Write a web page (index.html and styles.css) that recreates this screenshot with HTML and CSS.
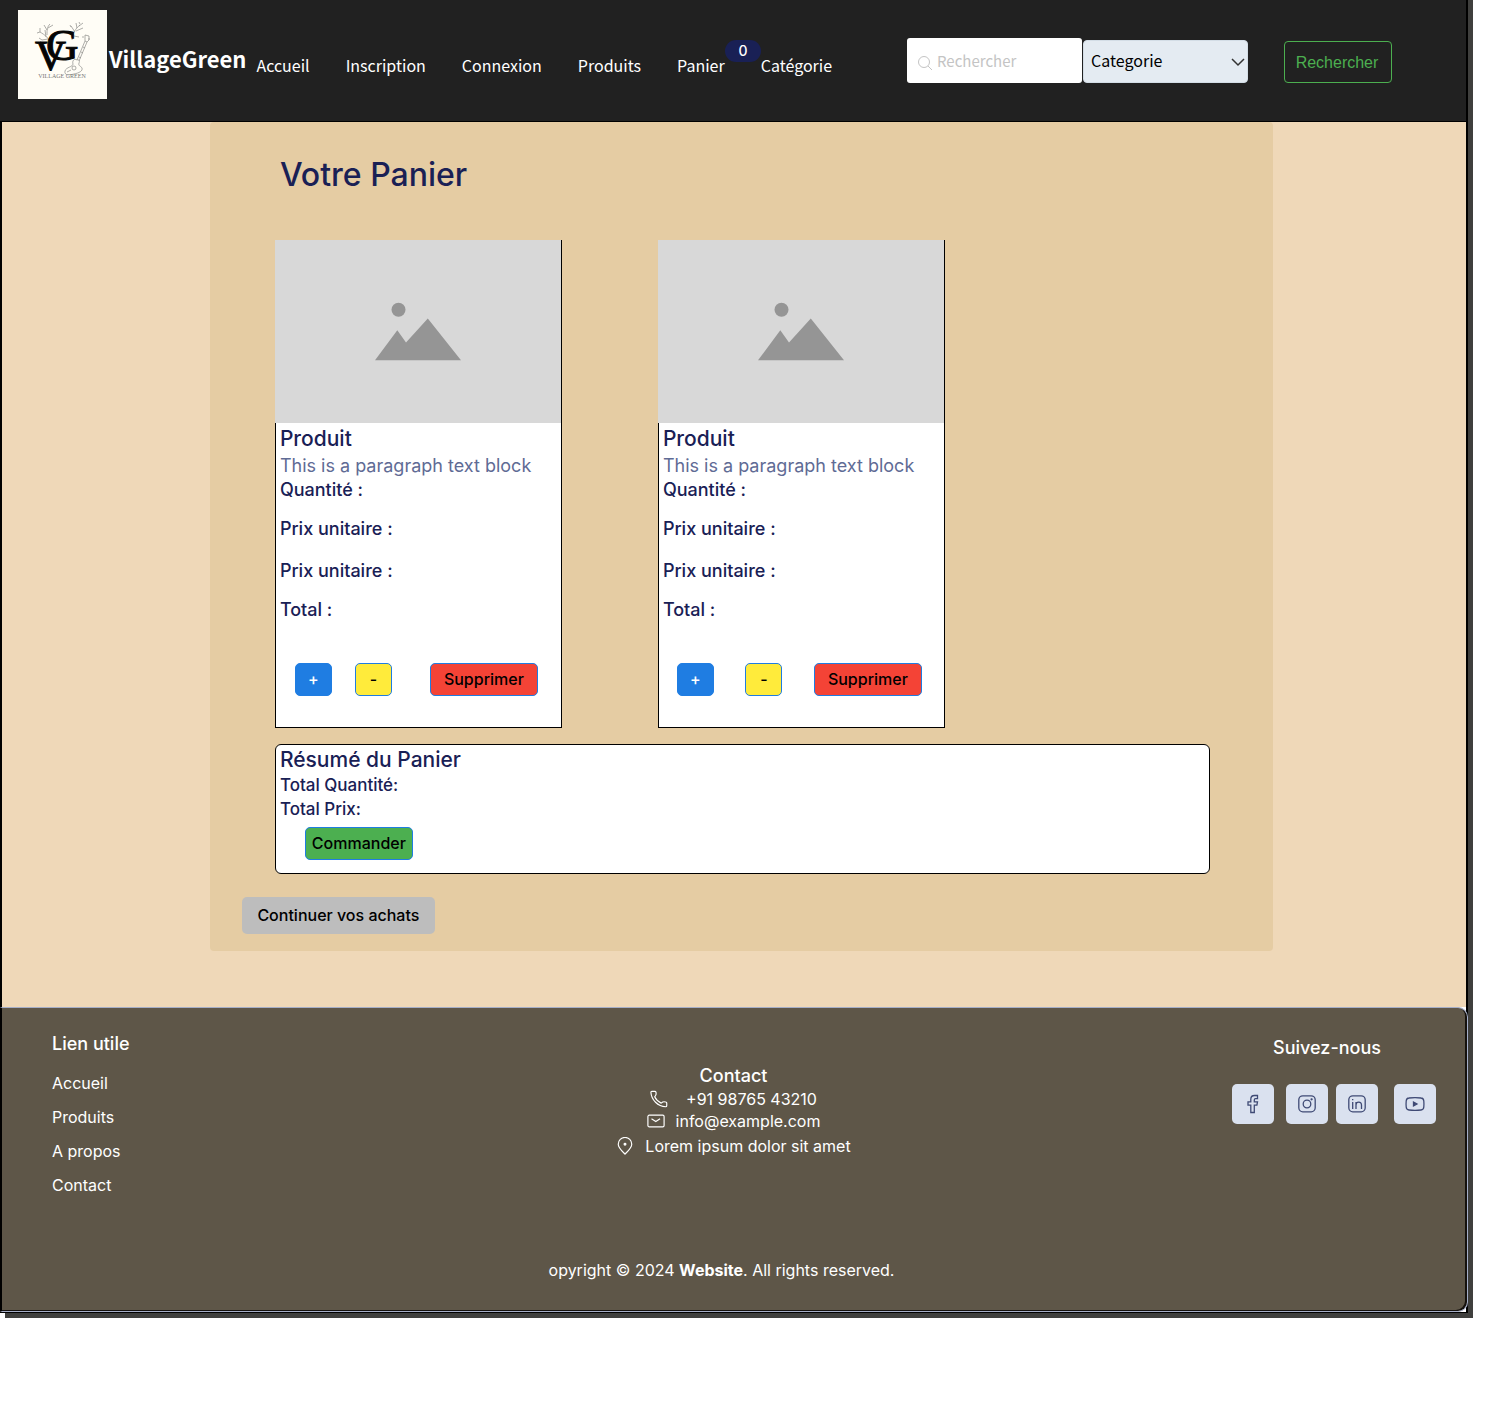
FILE: index.html
```html
<!DOCTYPE html>
<html lang="fr">
<head>
<meta charset="utf-8">
<meta name="viewport" content="width=device-width, initial-scale=1">
<title>VillageGreen - Votre Panier</title>
<link rel="stylesheet" href="styles.css">
</head>
<body>
<div class="page">
  <header class="header">
    <svg class="logo" viewBox="0 0 89 89" role="img" aria-label="Village Green">
      <rect width="89" height="89" fill="#fffdf6"/>
      <g fill="none" stroke="#8b8b88" stroke-width=".7">
        <path d="M33 34C31 28 27 25 22 22M28 27l-1-7M30 29l-6 1M29 25c0-5 0-8 3-11M29 20l-3-5M30 18l5-3M22 22l0-4M22 22l-3 1M24 30l-3-2M23 31l-2 3"/>
        <path d="M54 30c1-7 3-11 8-15M57 22l-4-6M59 18l-1-5M58 21l7-3M56 26l5 1M61 16l4-3M53 17l-1-2M62 14l-1-2"/>
        <path d="M59 50l8-19M61 51l8-19M67 31l0-6 4 1 0 4-2 2zM66 27l-2 0M70 29l2 0"/>
        <path d="M59 50c-3-2-5 1-4 4 0 3-7 3-8 7-1 5 5 4 9 3 5-1 9-3 8-6-1-2-4-2-3-5 1-2 0-4-2-3zM54 58a2 2 0 1 0 4 0a2 2 0 1 0-4 0M49 62l4-2M61 47l2 1M63 42l2 1M65 37l2 1"/>
      </g>
      <g class="logo-mark">
        <text x="28" y="50" font-size="45">G</text>
        <text x="17" y="60" font-size="43">V</text>
      </g>
      <text class="logo-name" x="44" y="68" font-size="6" text-anchor="middle">VILLAGE GREEN</text>
    </svg>
    <a class="brand" href="#">VillageGreen</a>
    <nav class="nav" aria-label="Navigation principale">
      <a href="#">Accueil</a>
      <a href="#">Inscription</a>
      <a href="#">Connexion</a>
      <a href="#">Produits</a>
      <a class="nav-cart" href="#">Panier<span class="badge">0</span></a>
      <a href="#">Catégorie</a>
    </nav>
    <form class="search">
      <label class="search-box">
        <svg viewBox="0 0 16 16" width="16" height="16" fill="none" stroke="#c4c4c4" aria-hidden="true"><circle cx="7" cy="7" r="5.5"/><path d="M11 11l4 4"/></svg>
        <input type="search" placeholder="Rechercher" aria-label="Rechercher">
      </label>
      <div class="select-box">
        <select aria-label="Categorie"><option>Categorie</option></select>
        <svg viewBox="0 0 14 10" width="14" height="10" fill="none" stroke="#333" stroke-width="1.5" aria-hidden="true"><path d="M1 2l6 6 6-6"/></svg>
      </div>
      <button class="search-submit" type="button">Rechercher</button>
    </form>
  </header>

  <main class="main">
    <section class="cart">
      <h1>Votre Panier</h1>
      <div class="products">
        <article class="product">
          <svg class="product-image" viewBox="0 0 286 183" role="img" aria-label="Image du produit"><rect width="286" height="183" fill="#d8d8d8"/><g fill="#959595"><circle cx="123.500" cy="69.800" r="7"/><path d="M100 120.300l22.300-30 8.700 12.200L152.800 78.500 186 120.300z"/></g></svg>
          <div class="product-text">
            <h2>Produit</h2>
            <p class="description">This is a paragraph text block</p>
            <p class="quantity">Quantité :</p>
            <p class="unit">Prix unitaire :</p>
            <p class="unit">Prix unitaire :</p>
            <p class="total">Total :</p>
          </div>
          <div class="actions">
            <button class="button step plus" type="button">+</button>
            <button class="button step minus" type="button">-</button>
            <button class="button wide delete" type="button">Supprimer</button>
          </div>
        </article>
        <article class="product">
          <svg class="product-image" viewBox="0 0 286 183" role="img" aria-label="Image du produit"><rect width="286" height="183" fill="#d8d8d8"/><g fill="#959595"><circle cx="123.500" cy="69.800" r="7"/><path d="M100 120.300l22.300-30 8.700 12.200L152.800 78.500 186 120.300z"/></g></svg>
          <div class="product-text">
            <h2>Produit</h2>
            <p class="description">This is a paragraph text block</p>
            <p class="quantity">Quantité :</p>
            <p class="unit">Prix unitaire :</p>
            <p class="unit">Prix unitaire :</p>
            <p class="total">Total :</p>
          </div>
          <div class="actions actions-even">
            <button class="button step plus" type="button">+</button>
            <button class="button step minus" type="button">-</button>
            <button class="button wide delete" type="button">Supprimer</button>
          </div>
        </article>
      </div>
      <section class="summary">
        <h2>Résumé du Panier</h2>
        <p>Total Quantité:</p>
        <p>Total Prix:</p>
        <button class="button wide order" type="button">Commander</button>
      </section>
      <button class="continue" type="button">Continuer vos achats</button>
    </section>
  </main>

  <footer class="footer">
    <div class="footer-columns">
      <nav class="footer-links" aria-label="Lien utile">
        <h3>Lien utile</h3>
        <a href="#">Accueil</a>
        <a href="#">Produits</a>
        <a href="#">A propos</a>
        <a href="#">Contact</a>
      </nav>
      <address class="contact">
        <h3>Contact</h3>
        <p class="phone"><svg viewBox="0 0 20 20" aria-hidden="true"><path d="M2 1.500h3.500c.7 0 1 .4 1.200 1.100.2 1.300.3 2.400-.3 3.200L5.200 7.600c1.300 3 4 5.500 7.200 7l1.700-1.200c1-.6 2-.4 3.400-.1.800.1 1.100.5 1.100 1.200v3c0 .7-.5 1.100-1.200 1.100C8.700 18.300 1.500 11 1 2.600c0-.7.400-1.100 1-1.100z"/></svg><a href="tel:+919876543210">+91 98765 43210</a></p>
        <p class="mail"><svg viewBox="0 0 20 20" aria-hidden="true"><rect x="1" y="3.500" width="18" height="13" rx="1.500"/><path d="M5 7.500l4.800 3 4.700-3"/></svg><a href="mailto:info@example.com">info@example.com</a></p>
        <p class="place"><svg viewBox="0 0 20 20" aria-hidden="true"><path d="M10 19C7 16 2.500 12 2.500 8a7.500 7.500 0 0 1 15 0c0 4-4.500 8-7.500 11z"/><circle cx="10" cy="8" r="1" fill="#fff"/></svg>Lorem ipsum dolor sit amet</p>
      </address>
      <section class="social">
        <h3>Suivez-nous</h3>
        <ul>
          <li><a href="#" aria-label="Facebook"><svg viewBox="0 0 20 20"><path d="M14.500 1.500h-3C9 1.500 7.800 3 7.800 5.300v2.500H5v3.400h2.800v7.300h3.500v-7.300h2.600l.6-3.400h-3.200V5.900c0-.8.3-1.200 1.200-1.200h2z"/></svg></a></li>
          <li><a href="#" aria-label="Instagram"><svg viewBox="0 0 20 20"><rect x="1.800" y="1.800" width="16.400" height="16" rx="4"/><circle cx="10" cy="10" r="3.800"/><circle cx="14.600" cy="5.300" r=".5" fill="#3f4a75"/></svg></a></li>
          <li><a href="#" aria-label="LinkedIn"><svg viewBox="0 0 20 20"><rect x="1.800" y="1.800" width="16.400" height="16" rx="4"/><path d="M5.700 8v7M5.700 5v1.200M9 15V8M9 11c0-3.500 5.500-4 5.500 0v4"/></svg></a></li>
          <li><a href="#" aria-label="YouTube"><svg viewBox="0 0 20 20"><path d="M4 4c4-.5 8-.5 12 0 2 .2 2.700 1.300 2.800 3 .2 2 .2 4 0 6-.1 1.700-.8 2.800-2.800 3-4 .4-8 .4-12 0-2-.2-2.700-1.300-2.800-3-.2-2-.2-4 0-6 .1-1.700.8-2.800 2.800-3z"/><path d="M8.500 8l3.500 2-3.500 2z" fill="#3f4a75"/></svg></a></li>
        </ul>
      </section>
    </div>
    <p class="copyright">opyright © 2024 <b>Website</b>. All rights reserved.</p>
  </footer>
</div>
</body>
</html>
```
FILE: styles.css
```css
* { box-sizing: border-box; }

body {
  min-height: 100vh;
  margin: 0;
  padding-bottom: 48px;
  background: #fff;
  color: #192055;
  font-family: Inter, "Liberation Sans", sans-serif;
  font-size: 16px;
}

h1, h2, h3, p, ul { margin: 0; padding: 0; font-weight: 500; }
a { color: inherit; text-decoration: none; }
button, input, select { font: inherit; }

.page {
  margin-right: 39px;
  border-right: 2px solid #000;
  border-bottom: 1px solid #000;
  box-shadow: 5px 0 0 #3f3f3d, 5px 5px 0 #3f3f3d;
}

/* Header */
.header {
  display: flex;
  align-items: flex-start;
  min-height: 122px;
  padding: 10px 74px 0 18px;
  border-bottom: 1px solid #000;
  background: #212121;
  color: #fff;
  font-family: "Noto Sans CJK JP", "Noto Sans", sans-serif;
}

.logo { flex: none; width: 89px; height: 89px; }
.logo-mark { fill: #050505; font-family: "Liberation Serif", serif; stroke: #050505; stroke-width: 1; }
.logo-name { fill: #777; font-family: "Liberation Serif", serif; }
.brand { margin: 32px 0 0 2px; font-size: 22px; line-height: 32px; font-weight: 700; }
.nav { display: flex; gap: 36px; margin: 43px 0 0 10px; line-height: 24px; }
.nav-cart { position: relative; }

.badge {
  position: absolute;
  left: 48px;
  top: -13px;
  width: 36px;
  height: 22px;
  border-radius: 11px;
  background: #192055;
  font-size: 14px;
  font-weight: 500;
  line-height: 22px;
  text-align: center;
  font-family: Inter, sans-serif;
}

.search { display: flex; align-items: flex-end; height: 73px; margin-left: auto; }

.search-box {
  display: flex;
  align-items: center;
  gap: 4px;
  width: 175px;
  height: 45px;
  margin-right: 1px;
  padding: 0 10px;
  border-radius: 3px;
  background: #fff;
}
.search-box svg { flex: none; margin-top: 4px; }
.search-box input { width: 100%; border: 0; padding: 0 0 2px; background: none; outline: 0; }
.search-box input::placeholder { color: #c4c4c4; opacity: 1; font-size: 15px; }

.select-box { display: grid; align-items: center; width: 165px; }
.select-box > * { grid-area: 1 / 1; }
.select-box select {
  appearance: none;
  width: 100%;
  height: 43px;
  padding: 0 7px 3px;
  border: 1px solid #d3dde6;
  border-radius: 4px;
  background: #e4ebf2;
  color: #000;
}
.select-box svg { justify-self: end; margin-right: 3px; pointer-events: none; }

.search-submit {
  width: 108px;
  height: 42px;
  margin-left: 36px;
  padding: 2px 2px 0 0;
  border: 1px solid #4caf50;
  border-radius: 4px;
  background: none;
  color: #4caf50;
  font-family: "Liberation Sans", Arial, sans-serif;
}

/* Cart */
.main { padding: 0 0 56px; border-left: 2px solid #000; background: #efd8b8; }

.cart {
  margin: 0 13.2% 0 14.2%;
  padding: 33px 63px 17px 65px;
  border-radius: 4px;
  background: #e5cca3;
}
.cart h1 { padding-left: 5px; font-size: 32px; line-height: 40px; }

.products { display: flex; flex-wrap: wrap; gap: 16px 96px; margin-top: 45px; }

.product {
  width: 287px;
  padding-bottom: 31px;
  border: 1px solid #000;
  border-top: 0;
  background: #fff;
}
.product-image { display: block; width: 286px; margin-left: -1px; }
.product-text { padding: 4px 4px 0; font-size: 18px; line-height: 24px; }
.product-text h2, .summary h2 { font-size: 21px; line-height: 24px; }
.description { margin-top: 3px; color: #5f6b95; font-weight: 400; }
.unit { margin-top: 15px; }
.unit + .unit { margin-top: 18px; }
.total { margin-top: 15px; }

.actions { display: flex; gap: 23px; margin-top: 41px; padding: 0 23px 0 19px; }
.actions .delete { margin-left: auto; }
.actions-even { justify-content: space-between; padding: 0 22px 0 18px; gap: 0; }
.actions-even .delete { margin-left: 0; }

.button {
  height: 33px;
  padding: 0 0 2px;
  border: 1px solid #1f7de2;
  border-radius: 5px;
  color: #000;
  font-size: 16px;
  font-weight: 500;
  line-height: 24px;
}
.step { width: 37px; }
.wide { width: 108px; }
.plus { background: #1f7de2; color: #fff; }
.minus { background: #ffeb3b; }
.delete { background: #f44336; }
.order { display: block; margin: 6px 0 0 25px; background: #4caf50; }

.summary {
  margin-top: 16px;
  padding: 3px 4px 13px;
  border: 1px solid #000;
  border-radius: 6px;
  background: #fff;
  font-size: 17px;
  line-height: 24px;
}
.summary h2 { margin-bottom: 1px; }

.continue {
  display: block;
  width: 193px;
  height: 37px;
  margin: 23px 0 0 -33px;
  padding: 0 0 2px;
  border: 0;
  border-radius: 5px;
  background: #bdbdbd;
  color: #000;
  font-weight: 500;
}

/* Footer */
.footer {
  margin-right: -2px;
  padding: 24px 31px 29px 29px;
  border: 1px solid #a5aec8;
  border-left: 2px solid #000;
  border-radius: 0 10px 10px 0;
  background: #5e5648;
  box-shadow: inset -2px -1px 0 #15110d;
  color: #fff;
}
.footer-columns { display: grid; grid-template-columns: 1fr auto 1fr; }
.footer h3 { font-size: 18px; line-height: 24px; }
.footer-links { padding-left: 21px; }
.footer-links h3 { margin-bottom: 10px; }
.footer-links a { display: block; line-height: 34px; }

.contact { padding-top: 32px; font-style: normal; text-align: center; }
.contact p { display: flex; align-items: center; justify-content: center; gap: 11px; line-height: 22px; font-weight: 400; }
.contact .phone { gap: 18px; }
.contact .place { line-height: 28px; }
.contact svg { width: 18px; height: 18px; fill: none; stroke: #fff; stroke-width: 1.3; }

.social { justify-self: end; padding-top: 4px; text-align: center; }
.social h3 { padding-right: 14px; }
.social ul { display: flex; gap: 8px; margin-top: 24px; list-style: none; }
.social li:first-child { margin-right: 4px; }
.social li:last-child { margin-left: 8px; }
.social a { display: grid; place-items: center; width: 42px; height: 40px; border-radius: 5px; background: #dae1ef; }
.social svg { width: 20px; height: 20px; fill: none; stroke: #3f4a75; stroke-width: 1.3; }

.copyright { margin-top: 56px; padding-right: 24px; line-height: 24px; font-weight: 400; text-align: center; }
```
